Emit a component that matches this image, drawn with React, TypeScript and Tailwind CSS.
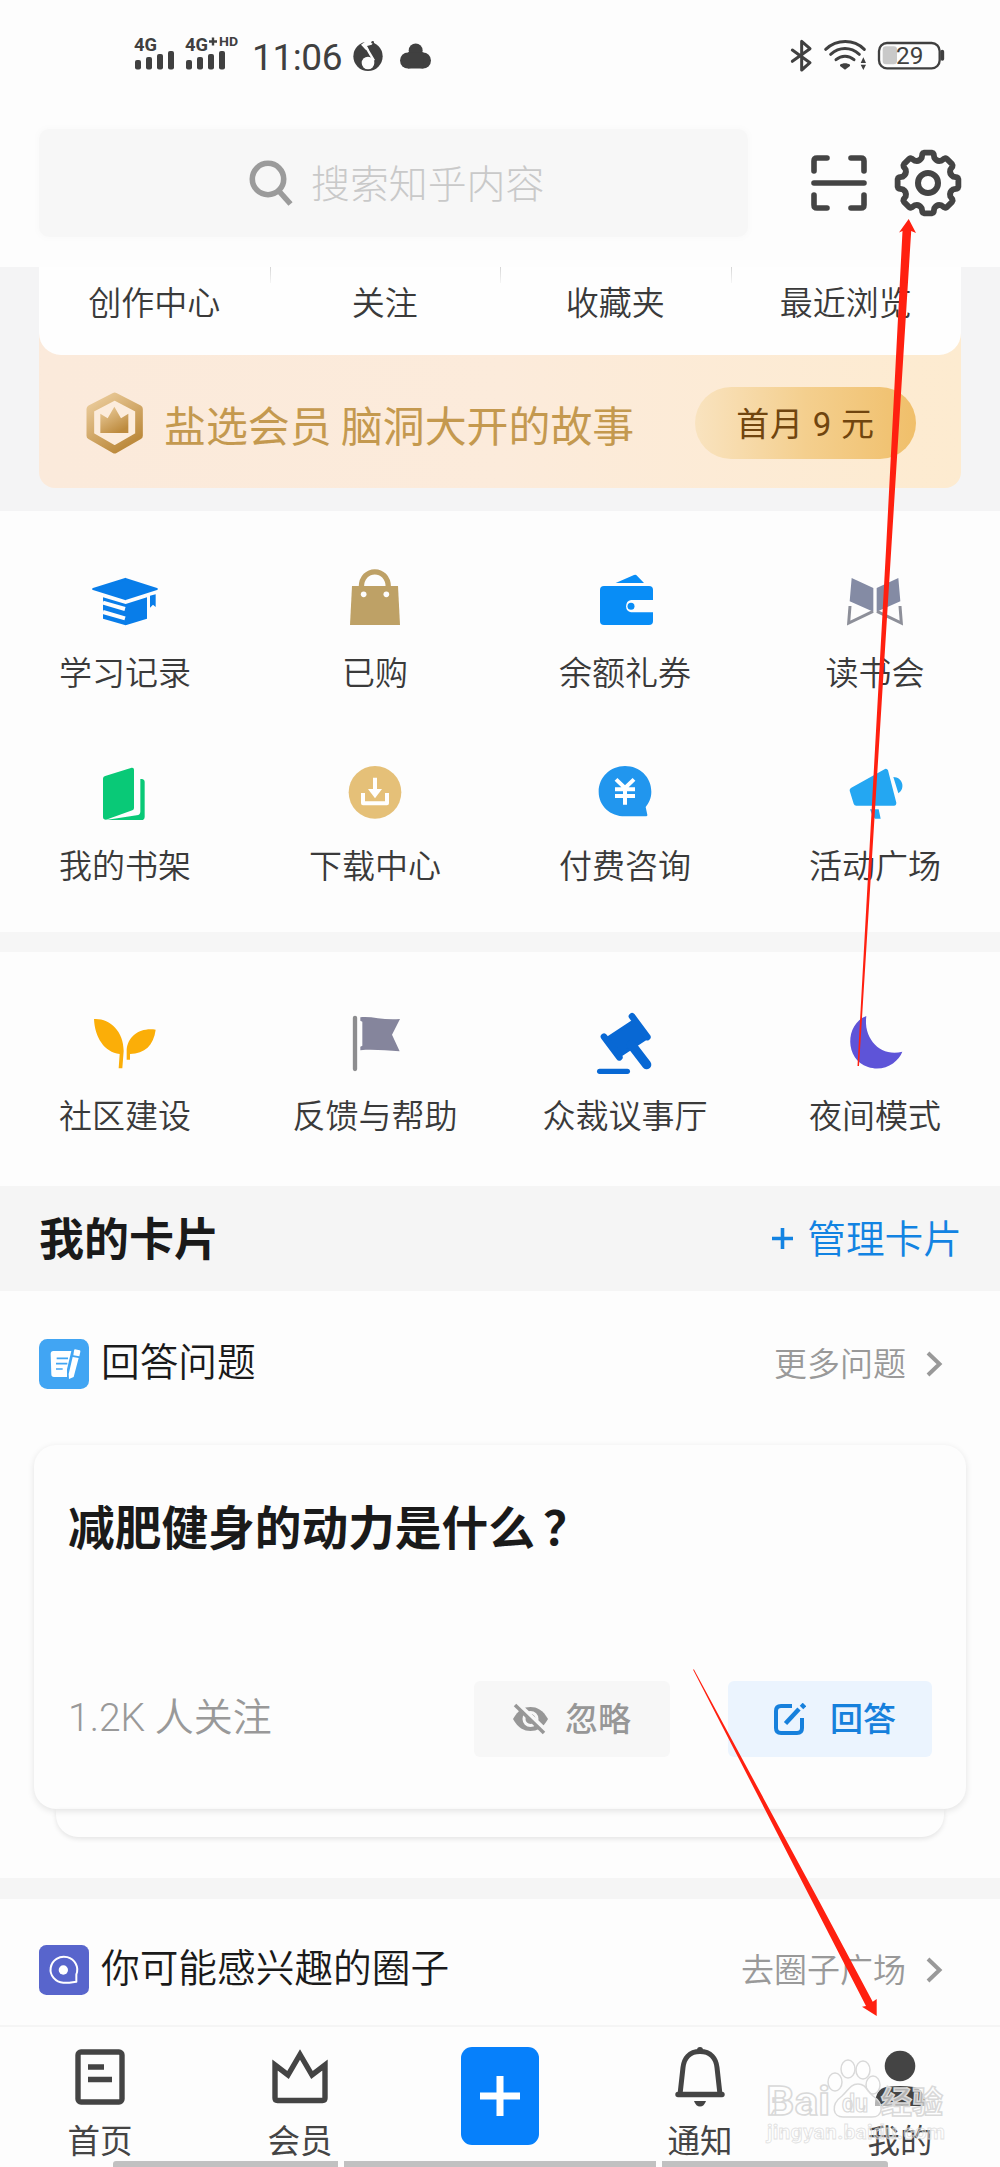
import type { ReactNode } from "react";

const FONT = "font-['Noto_Sans_CJK_SC','Noto_Sans',sans-serif]";

type Shortcut = { label: string; icon: ReactNode };

const STATS = ["创作中心", "关注", "收藏夹", "最近浏览"];

const SHORTCUTS: Shortcut[] = [
  { label: "学习记录", icon: <CapIcon /> },
  { label: "已购", icon: <BagIcon /> },
  { label: "余额礼券", icon: <WalletIcon /> },
  { label: "读书会", icon: <ReadingIcon /> },
  { label: "我的书架", icon: <BookIcon /> },
  { label: "下载中心", icon: <DownloadIcon /> },
  { label: "付费咨询", icon: <YuanIcon /> },
  { label: "活动广场", icon: <MegaphoneIcon /> },
];

const COMMUNITY: Shortcut[] = [
  { label: "社区建设", icon: <SproutIcon /> },
  { label: "反馈与帮助", icon: <FlagIcon /> },
  { label: "众裁议事厅", icon: <GavelIcon /> },
  { label: "夜间模式", icon: <MoonIcon /> },
];

export default function App() {
  return (
    <div className={`relative flex h-[2167px] w-[1000px] flex-col overflow-hidden bg-[#fdfdfd] ${FONT}`}>
      <StatusBar />
      <SearchHeader />
      <ProfileCard />
      <ShortcutGrid items={SHORTCUTS} className="h-[421px] pt-[44px]" />
      <div className="h-[20px] shrink-0 bg-[#f6f6f6]" />
      <ShortcutGrid items={COMMUNITY} className="h-[234px] pt-[46px]" />
      <div className="flex h-[105px] shrink-0 items-center justify-between bg-[#f5f5f5] pr-[38px] pb-[5px] pl-[39px]">
        <h2 className="text-[45px] leading-none font-bold text-[#1a1a1a]">我的卡片</h2>
        <div className="flex items-center gap-[14px] text-[38.7px] leading-none font-[350] text-[#1283e2]">
          <svg width="21" height="21" viewBox="0 0 21 21" className="mt-[5px]">
            <path d="M10.5 0v21M0 10.5h21" stroke="currentColor" strokeWidth="3.6" />
          </svg>
          <span>管理卡片</span>
        </div>
      </div>
      <QuestionSection />
      <div className="h-[21px] shrink-0 bg-[#f5f5f5]" />
      <div className="h-[126px] shrink-0 pt-[46px]">
        <SectionRow icon={<CircleBadge />} title="你可能感兴趣的圈子" more="去圈子广场" />
      </div>
      <TabBar />
      <Overlay />
    </div>
  );
}

function StatusBar() {
  return (
    <div className="flex h-[112px] shrink-0 justify-between pt-[34px] pr-[54px] pl-[134px] text-[#404040]">
      <div className="flex h-[40px] items-center">
        <svg width="106" height="40" viewBox="0 0 106 40" fill="currentColor" className="font-[Roboto,sans-serif] font-bold">
          <text x="0" y="16.5" fontSize="18" textLength="23" lengthAdjust="spacingAndGlyphs">4G</text>
          <text x="51" y="16.5" fontSize="18" textLength="23" lengthAdjust="spacingAndGlyphs">4G</text>
          <path d="M75 7.5h8M79 3.5v8" stroke="currentColor" strokeWidth="2.4" />
          <text x="85" y="12" fontSize="12.5" textLength="19" lengthAdjust="spacingAndGlyphs">HD</text>
          {[0, 51].map((x) => (
            <g key={x}>
              <rect x={x + 1} y="26" width="6" height="9.5" rx="2" />
              <rect x={x + 12} y="23" width="6" height="12.5" rx="2" />
              <rect x={x + 23} y="20" width="6" height="15.5" rx="2" />
              <rect x={x + 34} y="17" width="6" height="18.5" rx="2" />
            </g>
          ))}
        </svg>
        <span className="mt-[8px] ml-[12px] w-[90px] font-[Roboto,sans-serif] text-[37px] leading-[40px] tracking-[-0.4px]">11:06</span>
        <svg width="30" height="32" viewBox="1060 120 90 96" className="mt-[4px] ml-[11px]">
          <circle cx="1105" cy="169" r="44" fill="currentColor" />
          <path d="M1084 134l16-12h26l-10 12-14 4 6 12-10-1z" fill="#fdfdfd" />
          <circle cx="1119" cy="127" r="4" fill="currentColor" />
          <circle cx="1105" cy="189" r="19" fill="#fdfdfd" />
          <path d="M1097 138l26 44" stroke="#fdfdfd" strokeWidth="7" />
        </svg>
        <svg width="31" height="26" viewBox="1197 128 93 77" fill="currentColor" className="mt-[4px] ml-[17px]">
          <circle cx="1244" cy="150" r="21" />
          <circle cx="1221" cy="180" r="24" />
          <circle cx="1266" cy="180" r="24" />
          <rect x="1221" y="155" width="46" height="49" />
        </svg>
      </div>
      <svg width="156" height="40" viewBox="870 102 468 120" fill="none" stroke="currentColor" strokeWidth="9" strokeLinecap="round" strokeLinejoin="round">
        <path d="M877 150l53 38-25 22v-86l25 22-53 38" />
        <path d="M977 148c34-31 84-31 116 0M992 163c26-23 60-23 86 0M1008 179c16-14 38-14 54 0" />
        <path d="M1020 194c8-6 22-6 30 0v4l-15 11-15-11z" fill="currentColor" stroke="none" />
        <path d="M1090 172l8 17h-16zM1090 210l8-16h-16z" fill="currentColor" stroke="none" />
        <rect x="1148" y="139" width="43" height="54" rx="10" fill="#c9c9c9" stroke="none" />
        <rect x="1137" y="129" width="182" height="76" rx="24" strokeWidth="7" />
        <path d="M1327 155v22" strokeWidth="11" />
        <text x="1188" y="191" fontSize="69" fill="currentColor" stroke="none" textLength="82" lengthAdjust="spacingAndGlyphs" className="font-[Roboto,sans-serif]">29</text>
      </svg>
    </div>
  );
}

// Eight rounded teeth around the hub.
function gearPath() {
  const at = (r: number, deg: number) => {
    const a = ((deg - 90) * Math.PI) / 180;
    return `${(34 + r * Math.cos(a)).toFixed(2)} ${(34 + r * Math.sin(a)).toFixed(2)}`;
  };
  let d = "";
  for (let i = 0; i < 8; i++) {
    const c = i * 45;
    d += `${i === 0 ? "M" : "L"}${at(26, c - 14)}L${at(29.6, c - 11)}Q${at(30.6, c - 10)} ${at(30.6, c - 7)}`;
    d += `L${at(30.6, c + 7)}Q${at(30.6, c + 10)} ${at(29.6, c + 11)}L${at(26, c + 14)}`;
    d += `Q${at(22.8, c + 22.5)} ${at(26, c + 31)}`;
  }
  return d + "Z";
}

function SearchHeader() {
  return (
    <div className="flex h-[155px] shrink-0 items-start pt-[17px] pr-[38px] pl-[39px]">
      <div className="flex h-[108px] w-[709px] items-center rounded-[10px] bg-[#f7f7f7] pl-[210px] shadow-[0_0_5px_2px_#fafafa]">
        <svg width="44" height="46" viewBox="0 0 44 46" fill="none" stroke="#9b9b9b">
          <circle cx="19" cy="19" r="15.7" strokeWidth="5.6" />
          <path d="M29 30l12.5 14" strokeWidth="5.6" />
        </svg>
        <span className="mb-[3px] ml-[18px] text-[38.9px] leading-none font-light text-[#c9c9c9]">搜索知乎内容</span>
      </div>
      <svg width="56" height="56" viewBox="0 0 56 56" fill="none" stroke="#444" strokeWidth="5.6" strokeLinecap="round" strokeLinejoin="round" className="mt-[26px] ml-[63px]">
        <path d="M3 16V6q0-3 3-3h10M40 3h10q3 0 3 3v10M53 40v10q0 3-3 3H40M16 53H6q-3 0-3-3V40M3 28h50" />
      </svg>
      <svg width="68" height="68" viewBox="0 0 68 68" fill="none" stroke="#444" strokeWidth="5.8" strokeLinejoin="round" className="mt-[20px] ml-[27px]">
        <path d={gearPath()} />
        <circle cx="34" cy="34" r="10" strokeWidth="6" />
      </svg>
    </div>
  );
}

function ProfileCard() {
  return (
    <div className="h-[244px] shrink-0 bg-[#f4f4f5] px-[39px]">
      <div className="h-[221px] rounded-b-[16px] bg-linear-to-r from-[#fbeadb] via-[#fcebdb] to-[#fdebd0]">
        <div className="grid h-[88px] grid-cols-4 rounded-b-[22px] bg-[#fefefe]">
          {STATS.map((label, i) => (
            <div key={label} className="relative flex h-[69px] items-center justify-center text-[33px] leading-none font-[350] text-[#3a3a3a]">
              {label}
              {i > 0 && <span className="absolute top-0 left-0 h-[16px] w-px bg-linear-to-b from-[#d5d5d5] to-[#f5f5f5]" />}
            </div>
          ))}
        </div>
        <div className="flex h-[133px] items-center pt-[3px] pr-[45px] pl-[47px]">
          <svg width="57" height="62" viewBox="257 457 171 186">
            <defs>
              <linearGradient id="gold" x1="0" y1="0" x2="0.6" y2="1">
                <stop offset="0" stopColor="#edcfa0" />
                <stop offset="1" stopColor="#bd8b3e" />
              </linearGradient>
            </defs>
            <path d="M343 470l73 38v80l-73 42-73-42v-80z" fill="#fcecdc" stroke="url(#gold)" strokeWidth="23" strokeLinejoin="round" />
            <path d="M300 580v-58l22 14 20-35 20 35 22-14v58z" fill="url(#gold)" />
          </svg>
          <span className="mt-[1px] ml-[21px] text-[41.9px] leading-none whitespace-nowrap text-[#c4994f]">盐选会员 脑洞大开的故事</span>
          <div className="ml-auto flex h-[72px] w-[221px] items-center justify-center rounded-full bg-linear-to-r from-[#f9e3bf] via-[#f4cf8e] to-[#f0bf6a] pt-[3px] font-[Roboto,'Noto_Sans_CJK_SC',sans-serif] text-[33px] tracking-[0.8px] text-[#70450f]">
            首月 9 元
          </div>
        </div>
      </div>
    </div>
  );
}

function ShortcutGrid({ items, className }: { items: Shortcut[]; className: string }) {
  return (
    <div className={`grid shrink-0 grid-cols-4 content-start gap-y-[51px] ${className}`}>
      {items.map((item) => (
        <div key={item.label} className="flex h-[142px] flex-col items-center">
          {item.icon}
          <span className="mt-[12px] text-[33px] leading-[48px] font-[350] text-[#3a3a3a]">{item.label}</span>
        </div>
      ))}
    </div>
  );
}

function CapIcon() {
  return (
    <svg width="80" height="80" viewBox="255 45 240 240" fill="#087de9">
      <path d="M376 117l94 30-94 30-96-30z" stroke="#087de9" strokeWidth="7" strokeLinejoin="round" />
      <path d="M309 172l68 20 64-20v64l-64 20-68-20z" />
      <path d="M309 188l66 19M309 216l66 19" stroke="#fdfdfd" strokeWidth="12" />
      <path d="M450 167l17-4v38l-8-7-9 9z" />
    </svg>
  );
}

function BagIcon() {
  return (
    <svg width="80" height="80" viewBox="1005 45 240 240" fill="#bea166">
      <path d="M1084 142c0-62 81-62 81 0" fill="none" stroke="#bea166" strokeWidth="16" />
      <path d="M1056 138h138l6 117h-150z" />
      <circle cx="1091" cy="163" r="8.5" fill="#fdfdfd" />
      <circle cx="1159" cy="163" r="8.5" fill="#fdfdfd" />
    </svg>
  );
}

function WalletIcon() {
  return (
    <svg width="80" height="80" viewBox="255 45 240 240" fill="#088df6">
      <path d="M347 129l55-24q6-2 9 2l21 22z" />
      <rect x="300" y="138" width="159" height="117" rx="12" />
      <path d="M460 180h-67a19 19 0 0 0 0 37h67z" fill="#fdfdfd" />
      <circle cx="393" cy="199" r="10.5" />
    </svg>
  );
}

function ReadingIcon() {
  return (
    <svg width="80" height="80" viewBox="1005 45 240 240" fill="#848ba4">
      <path d="M1055 114l65 30v71l-71-31zM1195 114l-65 30v71l71-31z" />
      <path d="M1050 198l-4 51 73-35M1200 198l4 51-73-35" fill="none" stroke="#8d8f99" strokeWidth="9" />
    </svg>
  );
}

function BookIcon() {
  return (
    <svg width="80" height="80" viewBox="255 624 240 240" fill="#09c977">
      <path d="M318 707l77-24q7-1 7 6v115q0 5-5 7l-79 28q-9 0-9-8V716q0-7 9-9z" />
      <path d="M421 717h4q9 1 9 9v104q0 10-10 10H318l92-14q11-2 11-11z" />
    </svg>
  );
}

function DownloadIcon() {
  return (
    <svg width="80" height="80" viewBox="1005 624 240 240">
      <circle cx="1125" cy="757" r="79" fill="#e5c078" />
      <path d="M1125 713v42M1089 759v31h72v-31" fill="none" stroke="#fff" strokeWidth="12" strokeLinejoin="round" />
      <path d="M1104 747h42l-21 28z" fill="#fff" />
    </svg>
  );
}

function YuanIcon() {
  return (
    <svg width="80" height="80" viewBox="255 624 240 240">
      <path d="M375 678c44 0 79 33 79 77 0 21-8 34-17 46l5 23q1 5-4 5h-63c-44 0-79-31-79-74s35-77 79-77z" fill="#2196ee" />
      <path d="M348 718l27 26 27-26M345 748h60M345 768h60M375 744v50" fill="none" stroke="#fff" strokeWidth="12" />
    </svg>
  );
}

function MegaphoneIcon() {
  return (
    <svg width="80" height="80" viewBox="1005 624 240 240" fill="#24a7f2">
      <path d="M1054 743l101-56q6-2 9 4l25 97q0 9-7 9h-113q-6 0-8-6l-12-39q-1-6 5-9z" />
      <path d="M1180 711c27 0 38 34 15 49zM1110 808h26l6 28h-17q-10-10-15-28z" />
    </svg>
  );
}

function SproutIcon() {
  return (
    <svg width="80" height="80" viewBox="255 54 240 240" fill="#fbae08">
      <path d="M282 117c46-3 89 35 89 96l-4 52h-11l3-43c-46-5-75-51-77-105z" />
      <path d="M467 149c-48-7-84 20-87 61v29h10v-17c44-1 71-26 77-73z" />
    </svg>
  );
}

function FlagIcon() {
  return (
    <svg width="80" height="80" viewBox="1005 54 240 240">
      <path d="M1065 114v153" stroke="#8d8d8f" strokeWidth="13" strokeLinecap="round" />
      <path d="M1081 112c35-4 70 10 119 5l-24 47 23 50c-42-2-79-7-118-3v-11l6-3v-72l-6-3z" fill="#85859c" />
    </svg>
  );
}

function GavelIcon() {
  return (
    <svg width="80" height="80" viewBox="255 54 240 240" fill="#0868d4" stroke="#0868d4" strokeLinecap="round" strokeLinejoin="round">
      <path d="M321 176l74-49 44 47-74 49z" strokeWidth="10" />
      <path d="M312 170l46 62M396 109l46 62" strokeWidth="20" />
      <path d="M394 194l46 60" strokeWidth="28" />
      <path d="M299 274h83" strokeWidth="16" />
    </svg>
  );
}

function MoonIcon() {
  return (
    <svg width="80" height="80" viewBox="1005 54 240 240" fill="#5e54d8">
      <path d="M1099 108c-65 25-65 130 5 153 48 16 91-14 103-46-62 17-118-35-108-107z" />
    </svg>
  );
}

function SectionRow({ icon, title, more }: { icon: ReactNode; title: string; more: string }) {
  return (
    <div className="flex h-[50px] items-center px-[39px]">
      {icon}
      <span className="mb-[9px] ml-[12px] text-[38.7px] leading-none font-[350] text-[#1a1a1a]">{title}</span>
      <span className="mb-[3px] ml-auto text-[33px] leading-none font-[350] text-[#999]">{more}</span>
      <svg width="18" height="26" viewBox="0 0 18 26" fill="none" stroke="#999" strokeWidth="4" className="mr-[17px] ml-[20px]">
        <path d="M2 2l11.5 11L2 24" />
      </svg>
    </div>
  );
}

function NoteBadge() {
  return (
    <svg width="50" height="50" viewBox="117 117 150 150">
      <rect x="117" y="117" width="150" height="150" rx="25" fill="#41a5f3" />
      <path d="M160 153h54l-13 55v23h-39q-8 0-8-8l-2-61q0-9 8-9z" fill="#fff" />
      <path d="M170 175h34M168 191h34M168 207h20" stroke="#41a5f3" strokeWidth="5" />
      <path d="M225 148l14 3q3 1 2 4l-3 14-18-3 2-14q1-4 3-4zM218 171l18 3-15 57-14 6-1-15z" fill="#fff" />
    </svg>
  );
}

function CircleBadge() {
  return (
    <svg width="50" height="50" viewBox="117 494 150 150">
      <rect x="117" y="494" width="150" height="150" rx="22" fill="#5865cc" />
      <path d="M229 604v-22a40 39 0 1 0-39 25h18z" fill="none" stroke="#fff" strokeWidth="6" strokeLinejoin="round" />
      <circle cx="190" cy="569" r="14" fill="#fff" />
    </svg>
  );
}

function QuestionSection() {
  return (
    <div className="h-[587px] shrink-0 pt-[48px]">
      <SectionRow icon={<NoteBadge />} title="回答问题" more="更多问题" />
      <div className="mx-[34px] mt-[56px] flex h-[364px] flex-col rounded-[22px] bg-[#fdfdfd] px-[34px] pt-[55px] shadow-[0_2px_7px_rgba(0,0,0,0.11)]">
        <h3 className="text-[46.7px] leading-[50px] font-bold text-[#1a1a1a]">
          减肥健身的动力是什么<span className="ml-[8px]">？</span>
        </h3>
        <div className="mt-[131px] flex h-[76px] items-center">
          <span className="mb-[2px] font-[Roboto,'Noto_Sans_CJK_SC',sans-serif] text-[39px] leading-none font-[350] text-[#999]">1.2K 人关注</span>
          <button className="ml-auto flex h-[76px] w-[196px] items-center rounded-[6px] bg-[#f7f7f7] pl-[38px] text-[33px] leading-none font-medium text-[#979797]">
            <svg width="37" height="32" viewBox="0 0 37 32" className="mr-[16px]">
              <path d="M1 16C6 7 12 4 18.500 4S31 7 36 16C31 25 25 28 18.500 28S6 25 1 16z" fill="#979797" />
              <circle cx="18.500" cy="16" r="6.500" fill="none" stroke="#f7f7f7" strokeWidth="3" />
              <path d="M6 .5l29 28" stroke="#f7f7f7" strokeWidth="4" />
              <path d="M3 2l29 28" stroke="#979797" strokeWidth="3.500" />
            </svg>
            <span className="mb-[3px]">忽略</span>
          </button>
          <button className="ml-[58px] flex h-[76px] w-[204px] items-center rounded-[6px] bg-[#ebf4fe] pl-[46px] text-[33px] leading-none font-medium text-[#1680dc]">
            <svg width="32" height="32" viewBox="0 0 32 32" fill="none" stroke="currentColor" strokeWidth="4" className="mr-[24px]">
              <path d="M18 3H7Q2 3 2 8v17q0 5 5 5h16q5 0 5-5V15" />
              <path d="M11.500 20.500L25 6" strokeWidth="4.500" />
              <path d="M27.500 4.500l3-3" strokeWidth="5" />
            </svg>
            <span className="mb-[3px]">回答</span>
          </button>
        </div>
      </div>
      <div className="mx-[56px] h-[28px] rounded-b-[22px] shadow-[0_2px_5px_rgba(0,0,0,0.1)]" />
    </div>
  );
}

function TabBar() {
  return (
    <nav className="flex h-[142px] shrink-0 flex-col border-t-2 border-[#f5f5f5]">
      <div className="grid h-[134px] grid-cols-5 text-[#444]">
        <Tab label="首页">
          <rect x="8" y="8" width="44" height="50" rx="3" />
          <path d="M18 23h16M18 35.500h24" />
        </Tab>
        <Tab label="会员">
          <path d="M5 21l13 10L30 10.500 42 31l13-10v33q0 2.500-2.500 2.500h-45Q5 56.500 5 54z" strokeLinejoin="miter" />
        </Tab>
        <div className="flex justify-center pt-[20px]">
          <div className="flex h-[98px] w-[78px] items-center justify-center rounded-[11px] bg-[#0680fb]">
            <svg width="40" height="40" viewBox="0 0 40 40" stroke="#fff" strokeWidth="7">
              <path d="M20 0v40M0 20h40" />
            </svg>
          </div>
        </div>
        <Tab label="通知">
          <path d="M30 7.500c11 0 16 7 17 16l3 27H10l3-27c1-9 6-16 17-16z" strokeWidth="5" />
          <path d="M8 50.500h44" strokeLinecap="round" />
          <circle cx="30" cy="6" r="3" fill="currentColor" stroke="none" />
          <path d="M24 57h12q-2 5.500-6 5.500T24 57z" fill="currentColor" stroke="none" />
        </Tab>
        <Tab label="我的">
          <circle cx="30" cy="22" r="15.300" fill="currentColor" stroke="none" />
          <path d="M5 62V59Q6 45 16 43q14-2 28 0 10 2 11 16v3z" fill="currentColor" stroke="none" />
        </Tab>
      </div>
      <div className="flex h-[6px] gap-[6px] pl-[113px]">
        <div className="w-[225px] rounded-tl-[3px] bg-[#c1c1c1]" />
        <div className="w-[312px] bg-[#c1c1c1]" />
        <div className="w-[226px] rounded-tr-[3px] bg-[#c1c1c1]" />
      </div>
    </nav>
  );
}

function Tab({ label, children }: { label: string; children: ReactNode }) {
  return (
    <div className="flex flex-col items-center pt-[17px]">
      <svg width="60" height="64" viewBox="0 0 60 64" fill="none" stroke="currentColor" strokeWidth="5.400" strokeLinejoin="round">
        {children}
      </svg>
      <span className="mt-[11px] text-[32.5px] leading-[40px]">{label}</span>
    </div>
  );
}

// Red pointer arrows and the site watermark, drawn above everything else.
function Overlay() {
  return (
    <svg width="1000" height="2167" viewBox="0 0 1000 2167" className="pointer-events-none absolute inset-0">
      <g fill="#ff2010">
        <path d="M908.700 219l7.300 14-4.800-2-20 319-32.200 516h-1.500l28.500-516 16.500-319-3.500 1.500z" />
        <path d="M693 1669.500h1L818.500 1900l54.200 101.700 4-2.700v17l-14.700-9.300 4-.7L811.500 1900z" />
      </g>
      <g fill="#fff" fillOpacity="0.6" stroke="#d9d9d9" strokeWidth="1.500" className="font-[Roboto,sans-serif] font-bold">
        <text x="766" y="2115" fontSize="41" textLength="64" lengthAdjust="spacingAndGlyphs">Bai</text>
        <ellipse cx="835" cy="2082" rx="7" ry="9" />
        <ellipse cx="848" cy="2069" rx="7" ry="9" />
        <ellipse cx="863" cy="2070" rx="7" ry="9" />
        <ellipse cx="873" cy="2085" rx="7" ry="9" />
        <path d="M858 2084c-8 0-10 7-16 12-12 9-9 21 1 21h29c11 0 13-13 1-21-6-5-7-12-15-12z" />
        <text x="842" y="2112" fontSize="25" strokeWidth="1.200" textLength="26" lengthAdjust="spacingAndGlyphs">du</text>
        <text x="881" y="2113" fontSize="31" textLength="62" className="font-['Noto_Sans_CJK_SC',sans-serif]">经验</text>
        <text x="767" y="2139" fontSize="21" fillOpacity="0.4" strokeWidth="0.800" strokeOpacity="0.8" textLength="178">jingyan.baidu.com</text>
      </g>
    </svg>
  );
}
